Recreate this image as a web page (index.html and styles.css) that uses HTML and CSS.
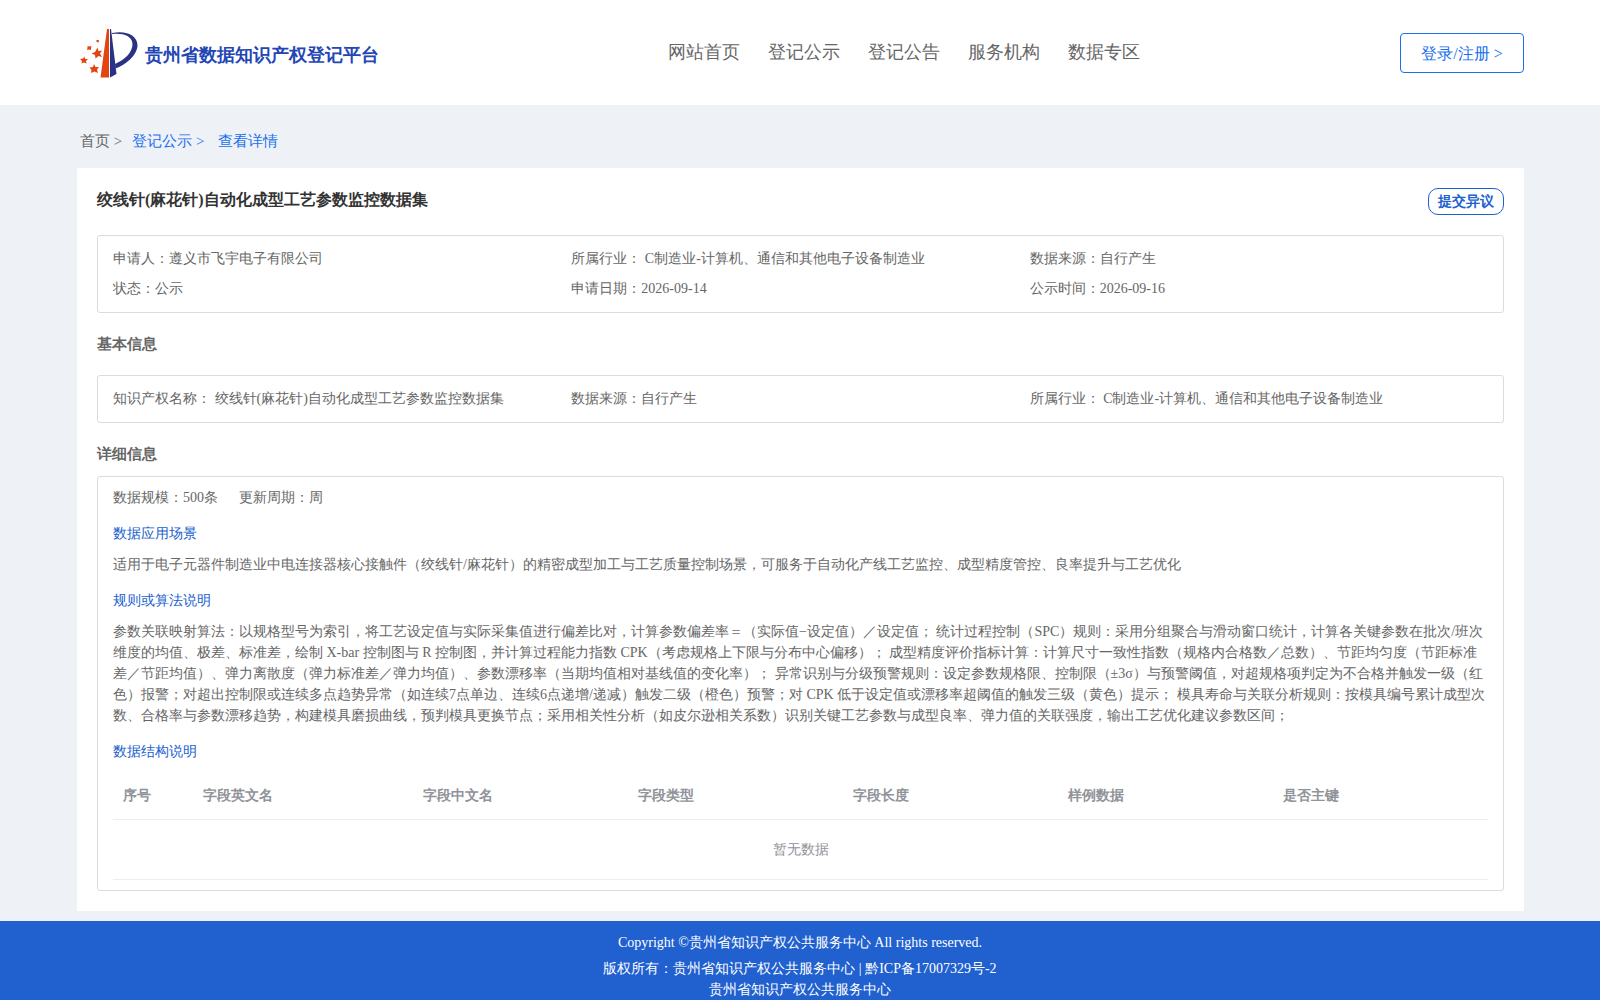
FILE: index.html
```html
<!DOCTYPE html>
<html lang="en">
<head>
    <meta charset="UTF-8">
    <title>贵州省数据知识产权登记平台</title>
    <link rel="stylesheet" href="styles.css">
</head>
<body>
    <header class="header">
        <a href="#" class="logo">
            <svg class="logo-mark" width="60" height="52" viewBox="0 0 60 52" aria-hidden="true">
                <path d="M27 2H29V50.500H20.500Z" fill="#e2450f"/>
                <path d="M30 2H31L36.500 47L30 50.500Z" fill="#2a3286"/>
                <path d="M32 6C46 3 57.500 8 57.500 18.500C57 29 45 38 35.500 41.500L35 37C44 33 52.500 26 52.500 17C52 8 42 6 32 7Z" fill="#2a3286"/>
                <g fill="#e2450f">
                    <path d="M17.500 20.500L18.500 24L22 23.500L20 26.500L22 30L18.500 29L15.500 31.500L15 28L11.500 26.500L15 25Z"/>
                    <path d="M14 37L15.500 40L19 40L17 42.500L18 46L14.500 44.500L11 46L11.500 43L9.500 40.500L13 40Z"/>
                    <path d="M4.500 29.500L5 32L8 32L6 34L6.500 36.500L4 35.500L1.500 36.500L2 34L0 32L3 31.500Z"/>
                    <path d="M7.500 19L9.500 19.500L11.500 19L11 21L11 23L9 22.500L7 23L7.500 21Z"/>
                    <path d="M16.500 13L19 13L18.500 15.500L16.500 15Z"/>
                </g>
            </svg>
            <span class="logo-text">贵州省数据知识产权登记平台</span>
        </a>
        <nav class="nav">
            <a href="#">网站首页</a>
            <a href="#">登记公示</a>
            <a href="#">登记公告</a>
            <a href="#">服务机构</a>
            <a href="#">数据专区</a>
        </nav>
        <button type="button" class="login">登录/注册 &gt;</button>
    </header>

    <main class="main">
        <div class="breadcrumb">
            <a href="#" class="home">首页 &gt;</a>
            <a href="#">登记公示 &gt;</a>
            <a href="#" class="current">查看详情</a>
        </div>

        <div class="card">
            <div class="card-head">
                <h1>绞线针(麻花针)自动化成型工艺参数监控数据集</h1>
                <button type="button" class="objection">提交异议</button>
            </div>

            <div class="box info">
                <div>申请人：遵义市飞宇电子有限公司</div>
                <div>所属行业： C制造业-计算机、通信和其他电子设备制造业</div>
                <div>数据来源：自行产生</div>
                <div>状态：公示</div>
                <div>申请日期：2026-09-14</div>
                <div>公示时间：2026-09-16</div>
            </div>

            <h2>基本信息</h2>
            <div class="box info">
                <div>知识产权名称： 绞线针(麻花针)自动化成型工艺参数监控数据集</div>
                <div>数据来源：自行产生</div>
                <div>所属行业： C制造业-计算机、通信和其他电子设备制造业</div>
            </div>

            <h2 class="tight">详细信息</h2>
            <div class="box detail">
                <div class="scale">
                    <span>数据规模：500条</span>
                    <span>更新周期：周</span>
                </div>
                <h3>数据应用场景</h3>
                <p>适用于电子元器件制造业中电连接器核心接触件（绞线针/麻花针）的精密成型加工与工艺质量控制场景，可服务于自动化产线工艺监控、成型精度管控、良率提升与工艺优化</p>
                <h3>规则或算法说明</h3>
                <p>参数关联映射算法：以规格型号为索引，将工艺设定值与实际采集值进行偏差比对，计算参数偏差率＝（实际值−设定值）／设定值； 统计过程控制（SPC）规则：采用分组聚合与滑动窗口统计，计算各关键参数在批次/班次维度的均值、极差、标准差，绘制 X-bar 控制图与 R 控制图，并计算过程能力指数 CPK（考虑规格上下限与分布中心偏移）； 成型精度评价指标计算：计算尺寸一致性指数（规格内合格数／总数）、节距均匀度（节距标准差／节距均值）、弹力离散度（弹力标准差／弹力均值）、参数漂移率（当期均值相对基线值的变化率）； 异常识别与分级预警规则：设定参数规格限、控制限（±3σ）与预警阈值，对超规格项判定为不合格并触发一级（红色）报警；对超出控制限或连续多点趋势异常（如连续7点单边、连续6点递增/递减）触发二级（橙色）预警；对 CPK 低于设定值或漂移率超阈值的触发三级（黄色）提示； 模具寿命与关联分析规则：按模具编号累计成型次数、合格率与参数漂移趋势，构建模具磨损曲线，预判模具更换节点；采用相关性分析（如皮尔逊相关系数）识别关键工艺参数与成型良率、弹力值的关联强度，输出工艺优化建议参数区间；</p>
                <h3>数据结构说明</h3>
                <table>
                    <colgroup>
                        <col class="col-index">
                        <col class="col-name">
                        <col span="5">
                    </colgroup>
                    <thead>
                        <tr>
                            <th>序号</th>
                            <th>字段英文名</th>
                            <th>字段中文名</th>
                            <th>字段类型</th>
                            <th>字段长度</th>
                            <th>样例数据</th>
                            <th>是否主键</th>
                        </tr>
                    </thead>
                    <tbody>
                        <tr>
                            <td colspan="7" class="empty">暂无数据</td>
                        </tr>
                    </tbody>
                </table>
            </div>
        </div>
    </main>

    <footer class="footer">
        <p class="copyright">Copyright ©贵州省知识产权公共服务中心 All rights reserved.</p>
        <p>版权所有：贵州省知识产权公共服务中心 | 黔ICP备17007329号-2</p>
        <p>贵州省知识产权公共服务中心</p>
    </footer>
</body>
</html>
```
FILE: styles.css
```css
* {
    box-sizing: border-box;
}

body {
    margin: 0;
    background: #eef2f6;
    color: #666;
    font-family: "Liberation Serif", serif;
    font-size: 14px;
    line-height: 21px;
}

h1, h2, h3, p {
    margin: 0;
}

a {
    color: inherit;
    text-decoration: none;
}

button {
    font-family: inherit;
    background: #fff;
    cursor: pointer;
}

.header {
    display: flex;
    justify-content: space-between;
    align-items: center;
    height: 105px;
    padding: 0 76px 0 77px;
    background: #fff;
}

.logo {
    display: flex;
    align-items: center;
    gap: 5px;
    padding-left: 3px;
}

.logo-text {
    padding-top: 6px;
    color: #2346b5;
    font-size: 18px;
    font-weight: bold;
}

.nav {
    display: flex;
    gap: 28px;
    padding-left: 28px;
    font-size: 18px;
}

.login {
    width: 124px;
    height: 40px;
    padding-top: 4px;
    border: 1px solid #1a6fee;
    border-radius: 4px;
    color: #1a6fee;
    font-size: 16px;
}

.main {
    padding: 0 76px 10px 77px;
}

.breadcrumb {
    display: flex;
    height: 63px;
    align-items: center;
    padding: 10px 3px 0;
    color: #1a6fee;
    font-size: 15px;
    gap: 10px;
}

.breadcrumb .home {
    color: #666;
}

.breadcrumb .current {
    margin-left: 4px;
}

.card {
    padding: 20px;
    background: #fff;
}

.card-head {
    display: flex;
    justify-content: space-between;
    align-items: flex-start;
    height: 47px;
}

h1 {
    color: #333;
    font-size: 16px;
    line-height: 24px;
}

.objection {
    width: 76px;
    height: 27px;
    padding: 0;
    border: 1px solid #2060cf;
    border-radius: 10px;
    color: #2060cf;
    font-size: 14px;
    font-weight: bold;
}

.box {
    border: 1px solid #dcdcdc;
    border-radius: 3px;
    padding: 8px 15px;
}

.info {
    display: grid;
    grid-template-columns: repeat(3, 1fr);
    line-height: 30px;
}

h2 {
    height: 62px;
    font-size: 15px;
    line-height: 62px;
}

h2.tight {
    height: 53px;
}

.detail {
    padding: 10px 15px;
}

.scale {
    display: flex;
    gap: 21px;
}

h3 {
    margin: 15px 0 10px;
    color: #2060cf;
    font-size: 14px;
    font-weight: normal;
}

table {
    width: 100%;
    table-layout: fixed;
    border-collapse: separate;
    border-spacing: 0;
}

.col-index {
    width: 80px;
}

.col-name {
    width: 220px;
}

th, td {
    padding: 0 10px;
    border-bottom: 1px solid #ebeef5;
    color: #909399;
    text-align: left;
}

th {
    height: 48px;
}

.empty {
    height: 60px;
    text-align: center;
}

.footer {
    padding: 11px 0 10px;
    background: #2060cf;
    color: #fff;
    text-align: center;
}

.copyright {
    margin-bottom: 5px;
}
```
